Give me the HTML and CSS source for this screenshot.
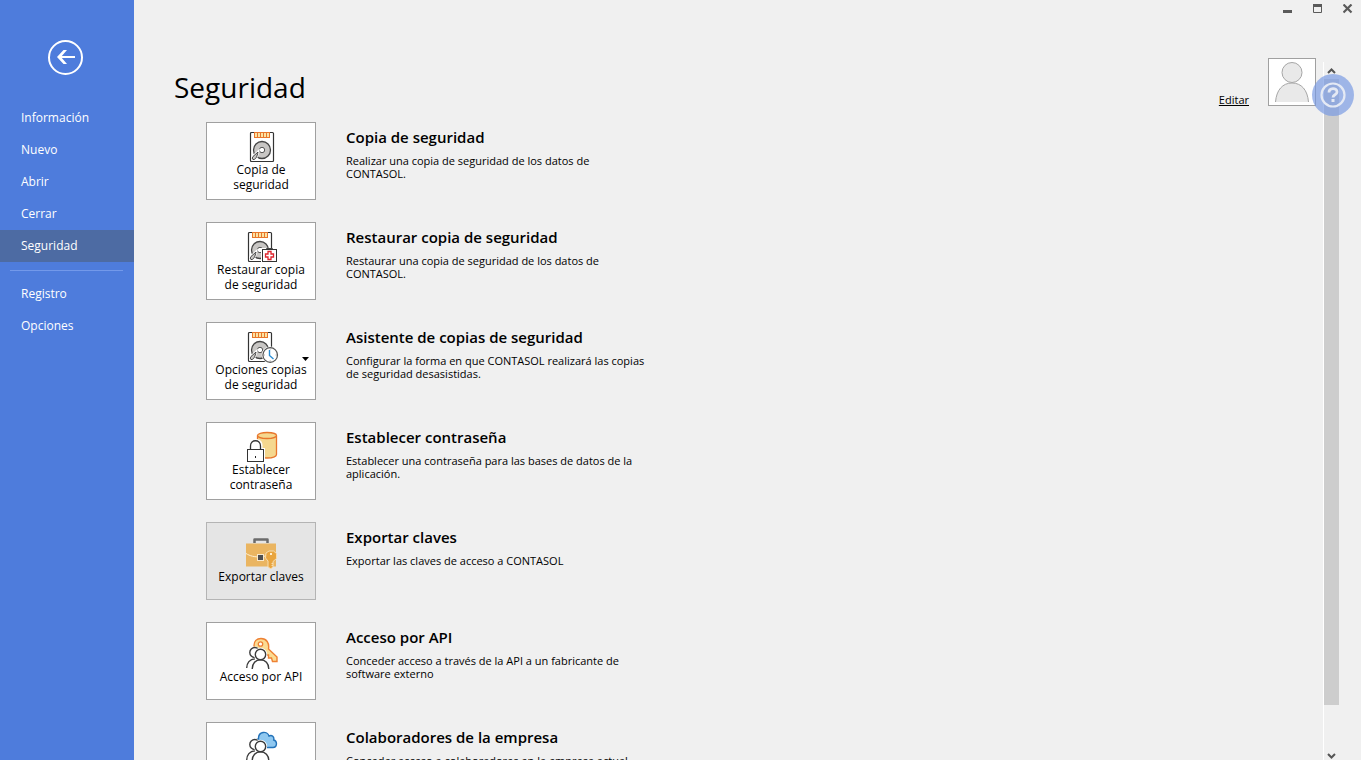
FILE: index.html
```
<!DOCTYPE html>
<html lang="es">
<head>
<meta charset="utf-8">
<title>CONTASOL - Seguridad</title>
<link rel="stylesheet" href="styles.css">
</head>
<body>
<svg class="defs" aria-hidden="true">
  <defs>
    <g id="disk">
      <rect x="3.500" y="2.500" width="23" height="29" rx="1" fill="#fff" stroke="#333" stroke-width="1.200"/>
      <rect x="7.500" y="2.500" width="15" height="5" fill="#fbe3a4" stroke="#e8762c"/>
      <path d="M10.500 2.500v5M13.500 2.500v5M16.500 2.500v5M19.500 2.500v5" stroke="#e8762c"/>
      <circle cx="15" cy="20" r="8.500" fill="#c8c6c4" stroke="#444" stroke-width="1.300"/>
      <circle cx="15" cy="20" r="2.700" fill="#fff" stroke="#555"/>
      <path d="M11 22l-5 4.500c-1.500 2-.5 3.500 1 3 2-.5 3-3 4-7.500z" fill="#c8c6c4" stroke="#fff" stroke-width="2.500"/>
      <path d="M11 22l-5 4.500c-1.500 2-.5 3.500 1 3 2-.5 3-3 4-7.500z" fill="#c8c6c4" stroke="#444"/>
    </g>
    <g id="people" fill="#fff" stroke="#3b3b3b" stroke-width="1.400">
      <path d="M1.700 31c0-5 3-9 8.300-9.300" stroke="#fff" stroke-width="3"/>
      <path d="M1.700 31c0-5 3-9 8.300-9.300"/>
      <circle cx="9.800" cy="15.500" r="6" stroke="none"/>
      <circle cx="9.800" cy="15.500" r="5"/>
      <path d="M7.500 32c0-5 3.500-9 8.300-9s8.300 4 8.300 9" stroke="#fff" stroke-width="3"/>
      <circle cx="15.500" cy="17.500" r="5.200" stroke="#fff" stroke-width="3"/>
      <path d="M7.200 32c0-5.500 3.500-9.200 8.300-9.200s8.300 3.700 8.300 9.200"/>
      <circle cx="15.500" cy="17.500" r="5.200"/>
    </g>
  </defs>
</svg>

<div class="app">
  <nav class="sidebar" aria-label="Archivo">
    <button class="back" type="button" aria-label="Volver">
      <svg width="35" height="35" viewBox="0 0 35 35" fill="none" stroke="#fff">
        <circle cx="17.500" cy="17.500" r="16.500" stroke-width="2"/>
        <path d="M27 17H11" stroke-width="2"/>
        <path d="M9 17L15.500 10H19L13 17L19 24H15.500Z" fill="#fff" stroke="none"/>
      </svg>
    </button>
    <a class="nav-item" href="#informacion">Información</a>
    <a class="nav-item" href="#nuevo">Nuevo</a>
    <a class="nav-item" href="#abrir">Abrir</a>
    <a class="nav-item" href="#cerrar">Cerrar</a>
    <a class="nav-item active" href="#seguridad" aria-current="page">Seguridad</a>
    <hr class="divider">
    <a class="nav-item" href="#registro">Registro</a>
    <a class="nav-item" href="#opciones">Opciones</a>
  </nav>

  <main class="main">
    <div class="titlebar">
      <button type="button" aria-label="Minimizar"><svg width="10" height="10"><rect y="6" width="9" height="3" fill="#5a5a5a"/></svg></button>
      <button type="button" aria-label="Maximizar"><svg width="10" height="10"><path d="M.5 .5h8v8h-8z" fill="none" stroke="#5a5a5a"/><rect width="9" height="3" fill="#5a5a5a"/></svg></button>
      <button type="button" aria-label="Cerrar ventana"><svg width="10" height="10"><path d="M.5 .5l8 8M8.500 .5l-8 8" stroke="#5a5a5a" stroke-width="2.200"/></svg></button>
    </div>

    <div class="body">
      <section class="content">
        <h1>Seguridad</h1>
        <ul class="options">
          <li class="option">
            <button class="tile" type="button">
              <svg width="32" height="32" viewBox="0 0 32 32"><use href="#disk" x="2"/></svg>
              <span>Copia de<br>seguridad</span>
            </button>
            <div class="info"><h2>Copia de seguridad</h2><p>Realizar una copia de seguridad de los datos de CONTASOL.</p></div>
          </li>
          <li class="option">
            <button class="tile" type="button">
              <svg width="32" height="32" viewBox="0 0 32 32"><use href="#disk"/>
                <rect x="16" y="18" width="16" height="14" fill="#fff"/>
                <path d="M21.500 19.500v-1h6v1" fill="none" stroke="#444"/>
                <rect x="17.500" y="19.500" width="14" height="12" fill="#fff" stroke="#333"/>
                <path d="M23 21.500h3v2.500h2.500v3H26v2.500h-3V27h-2.500v-3H23z" fill="#fff" stroke="#e0262f" stroke-width="1.300"/>
              </svg>
              <span>Restaurar copia<br>de seguridad</span>
            </button>
            <div class="info"><h2>Restaurar copia de seguridad</h2><p>Restaurar una copia de seguridad de los datos de CONTASOL.</p></div>
          </li>
          <li class="option">
            <button class="tile" type="button" aria-haspopup="menu">
              <svg width="32" height="32" viewBox="0 0 32 32" overflow="visible"><use href="#disk"/>
                <circle cx="25.200" cy="25" r="8.500" fill="#fff"/>
                <circle cx="25.200" cy="25" r="7.300" fill="#fff" stroke="#555" stroke-width="1.200"/>
                <path d="M24.500 20v5.500l4 3.500" fill="none" stroke="#2a8dd4" stroke-width="1.400"/>
                <path d="M25.200 18.500v1M25.200 30.500v1M18.700 25h1M30.700 25h1" stroke="#888"/>
              </svg>
              <span>Opciones copias<br>de seguridad</span>
              <svg class="caret" width="7" height="4"><path d="M0 0h7L3.500 4z"/></svg>
            </button>
            <div class="info"><h2>Asistente de copias de seguridad</h2><p>Configurar la forma en que CONTASOL realizará las copias de seguridad desasistidas.</p></div>
          </li>
          <li class="option">
            <button class="tile" type="button">
              <svg width="32" height="32" viewBox="0 0 32 32" overflow="visible">
                <path d="M12.500 5.500v19c0 2 4 3.500 9.500 3.500s9.500-1.500 9.500-3.500v-19" fill="#f5d88f" stroke="#e8762c" stroke-width="1.300"/>
                <ellipse cx="22" cy="5.500" rx="9.500" ry="3" fill="#f5d88f" stroke="#e8762c" stroke-width="1.300"/>
                <path d="M0 18h4.500v-3c0-8 13-8 13 0v3H20v14H0z" fill="#fff"/>
                <path d="M5.500 19.500V16c0-7 10-7 10 0v3.500" fill="#fff" stroke="#333" stroke-width="1.300"/>
                <rect x="2.500" y="19.500" width="16" height="12" fill="#fff" stroke="#333"/>
                <rect x="10" y="26" width="1" height="2" fill="#222"/>
              </svg>
              <span>Establecer<br>contraseña</span>
            </button>
            <div class="info"><h2>Establecer contraseña</h2><p>Establecer una contraseña para las bases de datos de la aplicación.</p></div>
          </li>
          <li class="option">
            <button class="tile single pressed" type="button">
              <svg width="32" height="32" viewBox="0 0 32 32">
                <path d="M9.500 6V2.500h13V6" fill="none" stroke="#6b6b6b" stroke-width="2.500" stroke-linejoin="round"/>
                <rect x="1" y="6.500" width="30" height="23" fill="#eab561"/>
                <path d="M1 16.500c4 2.500 8 3.500 15 3.500 2 0 3-.5 5-1.500" fill="none" stroke="#fff0d2"/>
                <rect x="12.500" y="17.500" width="6" height="6" fill="#505050" stroke="#f9e8ca"/>
                <path d="M21 16l3-2h4.500l3 2.500v5l-3.500 3v5l-2 2.500-3-2V24l-2.500-3z" fill="#e9a53f" stroke="#f7ddb0"/>
                <rect x="25" y="16" width="2" height="2" fill="#fff0d2"/>
                <path d="M28 26.500h-1.500M28 28.500h-1.500" stroke="#f7ddb0"/>
              </svg>
              <span>Exportar claves</span>
            </button>
            <div class="info"><h2>Exportar claves</h2><p>Exportar las claves de acceso a CONTASOL</p></div>
          </li>
          <li class="option">
            <button class="tile single" type="button">
              <svg width="32" height="32" viewBox="0 0 32 32" overflow="visible">
                <path d="M23.500 12C24.500 6 21.500 1.500 16 1.500c-4.500 0-7 3-7 7 0 5 5 8 10 7l2 2.500h2.500v3h3l1 3.500h4.500v-4.500z" fill="#fbdc93" stroke="#ee8133" stroke-width="1.400"/>
                <circle cx="15.500" cy="7" r="2.200" fill="#fff" stroke="#ee8133" stroke-width="1.300"/>
                <use href="#people"/>
              </svg>
              <span>Acceso por API</span>
            </button>
            <div class="info"><h2>Acceso por API</h2><p>Conceder acceso a través de la API a un fabricante de software externo</p></div>
          </li>
          <li class="option">
            <button class="tile" type="button">
              <svg width="32" height="32" viewBox="0 0 32 32" overflow="visible">
                <path d="M14 17.500c-5.500 0-5.500-8-.5-8.500C13 1 22.500.500 24 6c3-1.500 5.500 1 4.700 4 4 1 3.500 7.500-.7 7.500z" fill="#8fc8f0" stroke="#2272b9" stroke-width="1.400"/>
                <use href="#people" y="-1"/>
              </svg>
              <span>Colaboradores<br>de la empresa</span>
            </button>
            <div class="info"><h2>Colaboradores de la empresa</h2><p>Conceder acceso a colaboradores en la empresa actual.</p></div>
          </li>
        </ul>
      </section>

      <aside class="account">
        <a href="#editar">Editar</a>
        <svg class="avatar" width="46" height="46" viewBox="0 0 46 46" fill="#e9e9e9" stroke="#a6a6a6" role="img" aria-label="Usuario">
          <path d="M6.500 43C7.500 31 13.500 24 23 24s15.500 7 16.500 19"/>
          <circle cx="23" cy="13.500" r="10"/>
        </svg>
      </aside>

      <div class="scroll">
        <button type="button" aria-label="Subir"><svg width="9" height="6"><path d="M1 5l3.500-3.500L8 5" fill="none" stroke="#555" stroke-width="2"/></svg></button>
        <div class="track"><div class="thumb"></div></div>
        <button type="button" aria-label="Bajar"><svg width="9" height="6"><path d="M1 1l3.500 3.500L8 1" fill="none" stroke="#555" stroke-width="2"/></svg></button>
      </div>
    </div>
  </main>

  <button class="help" type="button" aria-label="Ayuda">
    <svg width="26" height="26" viewBox="0 0 26 26" fill="none" stroke="#e4e9f4">
      <circle cx="13" cy="13" r="11.500" stroke-width="2.200"/>
      <path d="M9 10.500c0-5 8-5 8-.5 0 3-4 2.500-4 5.500" stroke-width="2.800"/>
      <rect x="11.500" y="17" width="3" height="3" fill="#e4e9f4" stroke="none"/>
    </svg>
  </button>
</div>
</body>
</html>
```

FILE: styles.css
```
* { box-sizing: border-box; }

body {
  margin: 0;
  background: #f0f0f0;
  color: #000;
  font-family: "Open Sans", "Noto Sans", sans-serif;
  font-size: 12px;
}

button {
  padding: 0;
  border: 0;
  background: none;
  color: inherit;
  font: inherit;
}

svg { display: block; }

.defs {
  position: absolute;
  width: 0;
  height: 0;
}

.app {
  position: relative;
  display: flex;
  height: 100vh;
  overflow: hidden;
}

.sidebar {
  display: flex;
  flex: 0 0 134px;
  flex-direction: column;
  background: #4e7cdc;
}

.back { margin: 40px 0 27px 48px; align-self: flex-start; }

.nav-item {
  padding-left: 21px;
  color: #fff;
  line-height: 32px;
  text-decoration: none;
}

.nav-item.active { background: #4d6ba3; }

.divider {
  width: auto;
  margin: 8px 11px 7px 10px;
  border: 0;
  border-top: 1px solid #7399ea;
}

.main {
  display: flex;
  flex: 1;
  flex-direction: column;
  min-width: 0;
}

.titlebar {
  display: flex;
  justify-content: flex-end;
  gap: 20px;
  padding: 4px 8px;
}

.body {
  display: flex;
  flex: 1;
  min-height: 0;
}

.content {
  flex: 1;
  padding: 45px 0 0 40px;
}

h1 {
  margin: 0;
  font-size: 28px;
  font-weight: 400;
  line-height: 48px;
}

.options {
  display: flex;
  flex-direction: column;
  gap: 22px;
  margin: 11px 0 0 32px;
  padding: 0;
  list-style: none;
}

.option {
  display: flex;
  gap: 30px;
}

.tile {
  position: relative;
  display: flex;
  flex: 0 0 110px;
  flex-direction: column;
  align-items: center;
  justify-content: center;
  height: 78px;
  border: 1px solid #a0a0a0;
  background: #fff;
  line-height: 15px;
}

.tile.single { padding-bottom: 1px; }

.tile.pressed {
  border-color: #b4b4b4;
  background: #e5e5e5;
}

.caret {
  position: absolute;
  top: 34px;
  right: 6px;
}

.info {
  max-width: 300px;
  padding-top: 4px;
}

h2 {
  margin: 0;
  font-size: 15px;
  font-weight: 600;
  line-height: 22px;
  white-space: nowrap;
}

p {
  margin: 6px 0 0;
  font-size: 11px;
  line-height: 13px;
}

.account {
  display: flex;
  gap: 19px;
  align-items: flex-end;
  align-self: flex-start;
  margin-top: 40px;
}

.account a {
  color: inherit;
  font-size: 11px;
  line-height: 13px;
}

.avatar {
  width: 48px;
  height: 48px;
  border: 1px solid #a0a0a0;
  background: #fff;
}

.scroll {
  display: flex;
  flex: 0 0 16px;
  flex-direction: column;
  margin: 44px 22px 0 7px;
  border-left: 1px solid #fff;
}

.scroll button {
  display: flex;
  align-items: center;
  justify-content: center;
  height: 17px;
  flex: none;
}

.scroll button:last-child { height: 8px; }

.track { flex: 1; }

.thumb {
  height: 93%;
  background: #cdcdcd;
}

.help {
  position: absolute;
  top: 74px;
  right: 7px;
  display: grid;
  place-items: center;
  width: 42px;
  height: 42px;
  border-radius: 50%;
  background: rgba(120, 154, 227, .68);
}
```
